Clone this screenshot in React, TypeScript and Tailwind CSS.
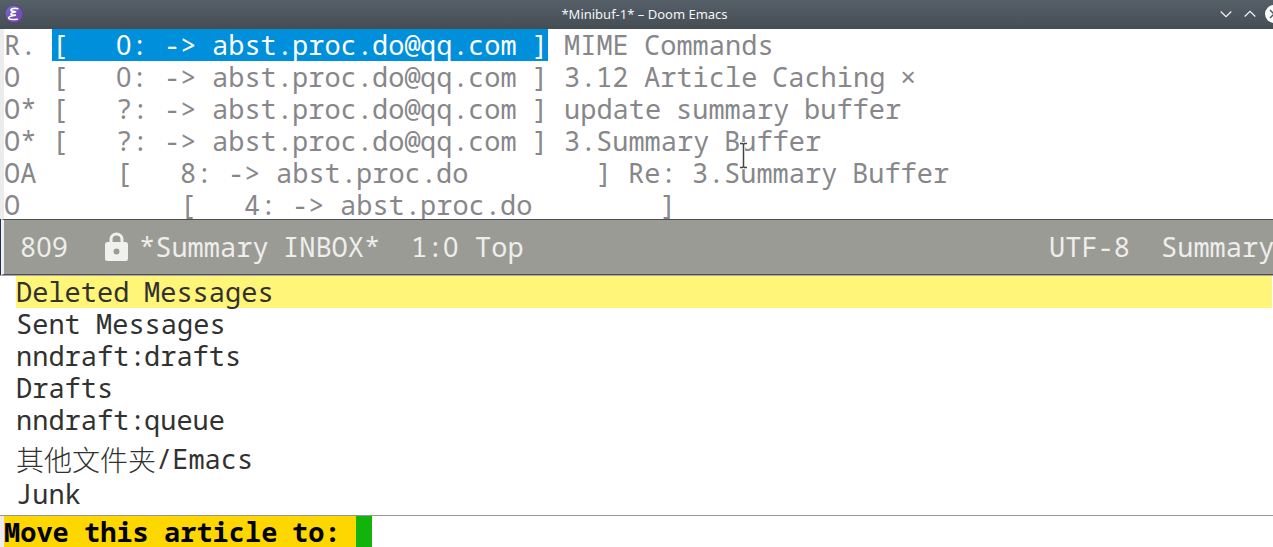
import type { ReactNode } from "react";

const CELL = 16;

/* The sans face supplies a zero without a slash. */
function Glyphs({ run }: { run: string }) {
  return (
    <>
      {run.split(/(0)/).map((part, i) =>
        part === "0" ? (
          <span key={i} className="font-['Noto_Sans']">
            0
          </span>
        ) : (
          part
        ),
      )}
    </>
  );
}

/* Every word occupies a whole number of character cells, as in a text frame. */
function Cells({ text }: { text: string }) {
  const runs = text.match(/\s+|[^\s.@:]+[.@:]*|[.@:]+/g) ?? [];
  return (
    <>
      {runs.map((run, i) => (
        <span key={i} className="inline-block" style={{ width: run.length * CELL }}>
          <Glyphs run={run} />
        </span>
      ))}
    </>
  );
}

type Article = { flags: string; author: string; subject: string; current?: boolean };

const articles: Article[] = [
  { flags: "R. ", author: "[   0: -> abst.proc.do@qq.com ]", subject: " MIME Commands", current: true },
  { flags: "O  ", author: "[   0: -> abst.proc.do@qq.com ]", subject: " 3.12 Article Caching ×" },
  { flags: "O* ", author: "[   ?: -> abst.proc.do@qq.com ]", subject: " update summary buffer" },
  { flags: "O* ", author: "[   ?: -> abst.proc.do@qq.com ]", subject: " 3.Summary Buffer" },
  { flags: "OA     ", author: "[   8: -> abst.proc.do        ]", subject: " Re: 3.Summary Buffer" },
  { flags: "O          ", author: "[   4: -> abst.proc.do        ]", subject: "" },
];

const folders = ["Deleted Messages", "Sent Messages", "nndraft:drafts", "Drafts", "nndraft:queue"];

function WindowButton({ label, children }: { label: string; children: ReactNode }) {
  return (
    <button type="button" aria-label={label} className="flex h-6 w-6 shrink-0 items-center justify-center">
      {children}
    </button>
  );
}

function TitleBar() {
  return (
    <header className="grid h-[29px] grid-cols-[1fr_auto_1fr] items-center bg-linear-to-b from-[#566069] to-[#454d54] pb-0.5 pl-1 text-[#f4f5f5]">
      <svg className="h-5 w-5" viewBox="0 0 20 20" aria-hidden="true">
        <defs>
          <linearGradient id="orb" x1="0" y1="0" x2="1" y2="1">
            <stop offset="0" stopColor="#7f73c8" />
            <stop offset="0.5" stopColor="#6b55b3" />
            <stop offset="1" stopColor="#8e3fb5" />
          </linearGradient>
        </defs>
        <circle cx="10" cy="10" r="9" fill="url(#orb)" stroke="#4c4280" strokeWidth="0.8" />
        <path
          d="M13.800 4.700C11 3.900 6.600 4.700 7 6.200c.3 1.100 3 1.200 4.700 1.500C9 8.200 6.300 9.500 7.200 10.500c.7.800 3 .6 4.200.6C8 11.500 4.300 12.500 4.600 14.200c.3 1.700 6 1.300 8.800 1"
          fill="none"
          stroke="#fff"
          strokeWidth="1.600"
          strokeLinecap="round"
          strokeLinejoin="round"
        />
      </svg>
      <h1 className="ml-3 font-['Noto_Sans'] text-[13px] leading-5">*Minibuf-1* – Doom Emacs</h1>
      <div className="flex justify-end overflow-hidden">
        <div className="-mr-[13px] flex">
          <WindowButton label="Minimize">
            <svg className="h-3 w-3" viewBox="0 0 12 12" fill="none" stroke="currentColor" strokeWidth="1.200">
              <path d="M0.700 3.500L6 8.700l5.300-5.200" />
            </svg>
          </WindowButton>
          <WindowButton label="Maximize">
            <svg className="h-3 w-3" viewBox="0 0 12 12" fill="none" stroke="currentColor" strokeWidth="1.200">
              <path d="M0.700 8.500L6 3.300l5.300 5.200" />
            </svg>
          </WindowButton>
          <WindowButton label="Close">
            <svg className="h-5 w-5" viewBox="0 0 20 20">
              <circle cx="10" cy="10" r="9" fill="#fcfcfc" />
              <path d="M6 6l8 8M14 6l-8 8" stroke="#4b545b" strokeWidth="1.300" />
            </svg>
          </WindowButton>
        </div>
      </div>
    </header>
  );
}

function Summary() {
  return (
    <section aria-label="Summary" className="relative h-[190px] overflow-hidden border-l-4 border-[#ececec] text-[#87878a]">
      {articles.map((a, i) => (
        <div key={i} className="h-8">
          <Cells text={a.flags} />
          <span className={a.current ? "inline-block h-8 bg-[#008fdb] text-white" : "inline-block h-8"}>
            <Cells text={a.author} />
          </span>
          <Cells text={a.subject} />
        </div>
      ))}
      <svg className="absolute top-3 -left-1 h-2 w-1" viewBox="0 0 4 8" aria-hidden="true">
        <path d="M0 0h1l3 3v2L1 8H0z" fill="#929292" />
      </svg>
      <svg className="absolute top-[113px] left-[734px] h-7 w-3" viewBox="0 0 12 28" aria-hidden="true">
        <path
          d="M2 1.500h2.500L5.500 2.500 6.500 1.500H9M5.500 2v23M2 25.500h2.500l1-1 1 1H9"
          fill="none"
          stroke="#fff"
          strokeWidth="3.500"
        />
        <path
          d="M2 1.500h2.500L5.500 2.500 6.500 1.500H9M5.500 2v23M2 25.500h2.500l1-1 1 1H9"
          fill="none"
          stroke="#444"
          strokeWidth="1.500"
        />
      </svg>
    </section>
  );
}

function ModeLine() {
  return (
    <div className="border-l border-[#1c2f57]">
      <div className="flex h-14 items-center border-y border-l-3 border-y-[#4d4f51] border-l-[#f0f0f0] bg-[#9b9b95] pl-4 text-[#eeeeec]">
        <Cells text="809" />
        <svg className="mr-[11px] ml-9 h-8 w-6 shrink-0" viewBox="0 0 24 32" aria-hidden="true">
          <path
            fillRule="evenodd"
            fill="#f0f0ee"
            d="M5.500 11V8.500a7 7 0 0 1 14 0V11h2a2.500 2.500 0 0 1 2.500 2.500v14A2.500 2.500 0 0 1 21.500 30H3.500a2.500 2.500 0 0 1-2.500-2.500v-14A2.500 2.500 0 0 1 3.500 11zm3 0h8V8.500a4 4 0 0 0-8 0zm4 6.500a3 3 0 1 0 0 6 3 3 0 0 0 0-6z"
          />
        </svg>
        <span>
          <Cells text="*Summary INBOX*  1:0 Top" />
        </span>
        <span className="ml-auto">
          <Cells text="UTF-8  Summary" />
        </span>
      </div>
    </div>
  );
}

export default function App() {
  return (
    <div className="min-h-screen overflow-hidden bg-white font-['Noto_Sans_Mono','DejaVu_Sans_Mono','Noto_Sans_CJK_SC',monospace] text-[27px] leading-8 whitespace-pre text-[#313131]">
      <TitleBar />
      <main>
        <Summary />
        <ModeLine />
        <ul className="border-t border-[#a8a8a0] pb-[5px] pl-4">
          {folders.map((name, i) => (
            <li key={name} className={i === 0 ? "mr-px h-8 bg-[#fff578]" : "h-8"}>
              <Cells text={name} />
            </li>
          ))}
          <li className="flex h-[42px] items-center pt-1">
            <span className="font-['Noto_Sans_CJK_SC',sans-serif] text-[28px] font-light">其他文件夹</span>
            <Cells text="/Emacs" />
          </li>
          <li className="h-8">
            <Cells text="Junk" />
          </li>
        </ul>
        <div className="flex h-8 overflow-hidden border-t border-[#96968f]">
          <div className="flex h-8 min-w-0 flex-1 border-l-4 border-[#ececec]">
            <label htmlFor="target" className="bg-[#ffd700] font-bold text-black">
              <Cells text="Move this article to: " />
            </label>
            <span className="h-8 w-4 bg-[#12b30a]" />
            <input id="target" type="text" className="min-w-0 flex-1 bg-white caret-transparent outline-none" />
          </div>
        </div>
      </main>
    </div>
  );
}
